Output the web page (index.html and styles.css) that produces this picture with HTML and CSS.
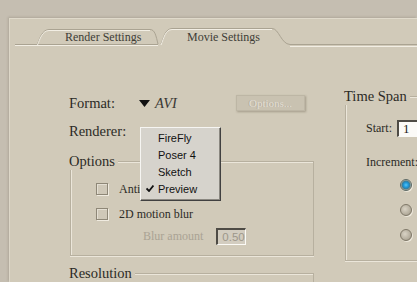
FILE: index.html
```html
<!DOCTYPE html>
<html>

<head>
	<title>Movie Settings</title>
	<link rel="stylesheet" href="styles.css">
</head>

<body>
	<div class="frame">
		<div class="tabstrip">
			<svg class="tabart" viewBox="10 19 407 28" width="407" height="28">
				<!-- shadow pass -->
				<g fill="none" stroke="#aaa392" stroke-width="1" transform="translate(0,-1)">
					<path d="M15 45.5 L158 45.5" />
					<path d="M37.5 45 C40 39 42 31 49 30.5 L150 30.5 C155 30.5 156 37 158 45" />
					<path d="M161 45 C164 38 165 30 172 29.5 L272 29.5 C279 29.5 281 45 290 45.5 L417 45.5" />
				</g>
				<!-- highlight pass -->
				<g fill="none" stroke="#f2eee4" stroke-width="1">
					<path d="M15 45.5 L158 45.5" />
					<path d="M37.5 45 C40 39 42 31 49 30.5 L150 30.5" />
					<path d="M161 45 C164 38 165 30 172 29.5 L272 29.5" />
					<path d="M290 46.5 L417 46.5" />
				</g>
			</svg>
			<div class="tablabels">
				<span class="tab first">Render Settings</span>
				<span class="tab">Movie Settings</span>
			</div>
		</div>

		<div class="main">
			<div class="col-left">
				<div class="row format">
					<span class="label">Format:</span>
					<span class="picker">
						<svg width="11" height="7" viewBox="0 0 11 7"><path d="M0 0 L11 0 L5.5 7 Z" fill="#111" /></svg>
						<i>AVI</i>
					</span>
					<button class="btn" disabled>Options...</button>
				</div>

				<div class="row renderer">
					<span class="label">Renderer:</span>
					<div class="menu">
						<div class="item">FireFly</div>
						<div class="item">Poser 4</div>
						<div class="item">Sketch</div>
						<div class="item checked">
							<svg class="tick" width="8" height="7" viewBox="0 0 8 7"><path d="M0.5 3.5 L3 6 L7.5 0.5" fill="none" stroke="#111" stroke-width="1.8" /></svg>
							Preview
						</div>
					</div>
				</div>

				<div class="group">
					<div class="group-head"><span>Options</span></div>
					<div class="group-body opts">
						<div class="check"><span class="box"></span>Anti</div>
						<div class="check two"><span class="box"></span>2D motion blur</div>
						<div class="blur">
							<span class="dim">Blur amount</span>
							<span class="field">0.50</span>
						</div>
					</div>
				</div>

				<div class="group-head res"><span>Resolution</span></div>
			</div>

			<div class="col-right">
				<div class="group">
					<div class="group-head"><span>Time Span</span></div>
					<div class="group-body span">
						<div class="start">
							<span class="small">Start:</span>
							<span class="field white">1</span>
						</div>
						<div class="small inc">Increment:</div>
						<div class="radios">
							<span class="radio on"></span>
							<span class="radio"></span>
							<span class="radio"></span>
						</div>
					</div>
				</div>
			</div>
		</div>
	</div>
</body>

</html>
```

FILE: styles.css
```css
body {
	margin: 0;
	width: 417px;
	height: 282px;
	overflow: hidden;
	background: #c5beb1;
	font-family: "Liberation Serif", serif;
	color: #2c2a26;
}

.frame {
	margin: 18px 0 0 9px;
	height: 263px;
	overflow: hidden;
	background: #d1cab9;
	border-top: 1px solid #e0dacb;
	border-left: 1px solid #ddd7c8;
	box-shadow: -1px -1px 2px rgba(80, 70, 50, 0.18);
}

/* tabs: the drawing and the labels share one grid cell */
.tabstrip {
	display: grid;
	height: 28px;
}

.tabart,
.tablabels {
	grid-area: 1 / 1;
}

.tablabels {
	display: flex;
	padding: 11px 0 0 55px;
	font-size: 12px;
	line-height: 14px;
	color: #403d37;
}

.tab.first {
	width: 122px;
}

/* main area */
.main {
	display: flex;
	gap: 30px;
	padding-left: 59px;
}

.col-left {
	flex-shrink: 0;
	width: 245px;
	padding-top: 46px;
}

.row {
	display: flex;
	align-items: center;
	height: 20px;
	font-size: 14.5px;
}

.label {
	width: 70px;
}

.picker {
	display: flex;
	align-items: center;
	gap: 5px;
	width: 97px;
}

.picker i {
	font-size: 14.5px;
	color: #3a3834;
}

.btn {
	width: 69px;
	height: 16px;
	padding: 0;
	background: #c9c2b1;
	border: 1px solid #bdb6a5;
	box-shadow: 1px 1px 2px rgba(60, 50, 30, 0.3);
	font-family: "Liberation Serif", serif;
	font-size: 11px;
	color: #e2ddd2;
	text-shadow: -1px 0 0 #b5ae9e;
}

.renderer {
	position: relative;
	margin-top: 8px;
}

/* popup menu */
.menu {
	position: absolute;
	left: 71px;
	top: 6px;
	width: 79px;
	padding: 1px 0 3px;
	background: #d6d3cc;
	border-top: 1px solid #f6f5f2;
	border-left: 1px solid #f6f5f2;
	border-right: 1px solid #404040;
	border-bottom: 1px solid #404040;
	box-shadow: inset -1px -1px 0 #8a8780;
	font-family: "Liberation Sans", sans-serif;
	font-size: 11px;
	color: #111;
	z-index: 2;
}

.item {
	display: flex;
	align-items: center;
	height: 17px;
	padding-left: 17px;
}

.item.checked {
	padding-left: 5px;
}

.tick {
	margin-right: 4px;
}

/* group boxes */
.group {
	margin-top: 11px;
}

.group-head {
	display: flex;
	height: 18px;
	font-size: 14.5px;
	line-height: 18px;
}

.group-head span {
	padding-right: 3px;
}

.group-head::after {
	content: "";
	flex: 1;
	margin-top: 9px;
	border-top: 1px solid #b7b09f;
	border-right: 1px solid #b7b09f;
	box-shadow: inset 0 1px 0 #ebe6da;
}

.group-body {
	border-left: 1px solid #b7b09f;
	border-right: 1px solid #b7b09f;
	border-bottom: 1px solid #b7b09f;
	box-shadow: inset 1px 0 0 #ebe6da, 0 1px 0 #ebe6da;
	margin-left: 1px;
}

.opts {
	padding: 9px 0 10px 25px;
	font-size: 12px;
}

.check {
	display: flex;
	align-items: center;
	gap: 11px;
	height: 20px;
}

.check.two {
	margin-top: 5px;
}

.box {
	width: 10px;
	height: 10px;
	border: 1px solid #8e8777;
	background: #cfc8b8;
	box-shadow: 1px 1px 0 #f0ebe0, inset 1px 1px 0 #e4dfd3;
}

.blur {
	display: flex;
	align-items: center;
	gap: 13px;
	height: 18px;
	margin-top: 3px;
	padding-left: 47px;
}

.dim {
	color: #aaa394;
}

.field {
	width: 23px;
	height: 14px;
	padding-left: 4px;
	overflow: hidden;
	white-space: nowrap;
	background: #d3cdc0;
	border-top: 2px solid #4e4b45;
	border-left: 2px solid #4e4b45;
	border-right: 1px solid #fbfaf6;
	border-bottom: 1px solid #fbfaf6;
	font-family: "Liberation Sans", sans-serif;
	font-size: 11.5px;
	line-height: 14px;
	color: #9d978a;
}

.group-head.res {
	margin-top: 8px;
}

/* right column */
.col-right {
	flex-shrink: 0;
	width: 130px;
	padding-top: 29px;
}

.span {
	border-right: none;
	padding: 14px 0 19px 20px;
	font-size: 12px;
}

.start {
	display: flex;
	align-items: center;
	gap: 5px;
	height: 18px;
}

.field.white {
	width: 60px;
	background: #fbfaf7;
	font-family: "Liberation Serif", serif;
	font-size: 13px;
	color: #222;
}

.inc {
	margin-top: 16px;
	height: 18px;
	line-height: 18px;
}

.radios {
	display: flex;
	flex-direction: column;
	gap: 13px;
	margin-top: 8px;
	padding-left: 34px;
}

.radio {
	width: 10px;
	height: 10px;
	border-radius: 50%;
	border: 1px solid #7f7868;
	background: radial-gradient(circle at 40% 40%, #d9d3c5 0, #b6af9f 60%, #9b9484 100%);
	box-shadow: 1px 1px 0 #ede8dc;
}

.radio.on {
	border-color: #5d6a66;
	background: radial-gradient(circle, #55c6f5 0, #1d94d6 2.5px, #3c7c95 4px, #b4b3a5 5px);
}
```
